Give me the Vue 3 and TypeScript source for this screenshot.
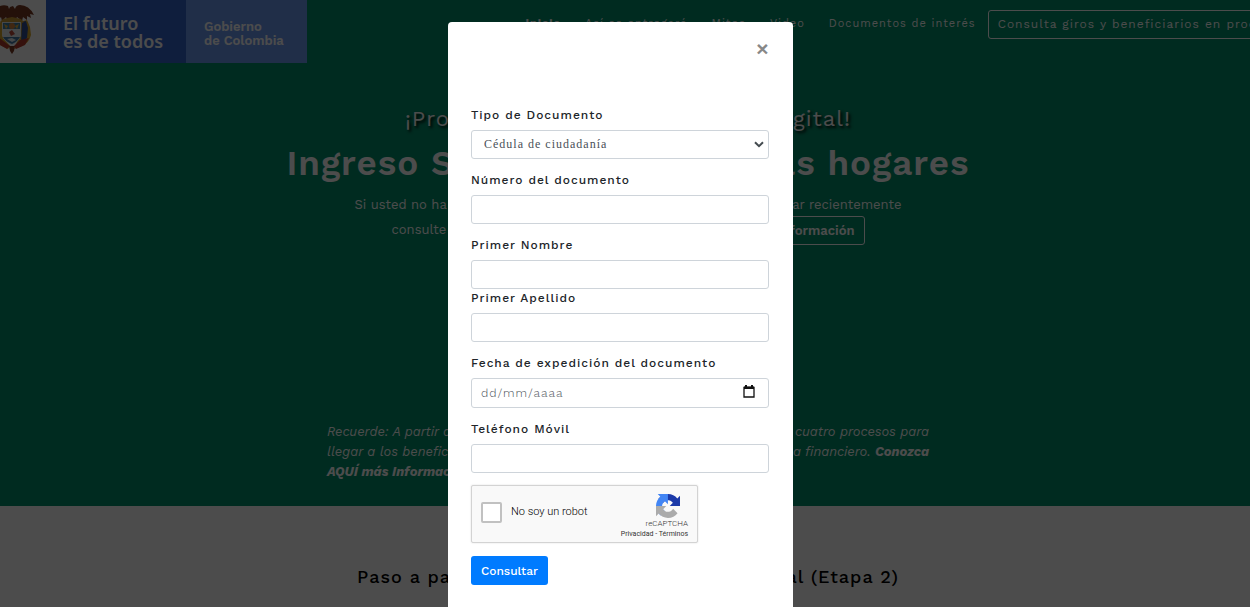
<script setup lang="ts">
import { ref } from 'vue'

const documentType = ref('cc')
const documentNumber = ref('')
const firstName = ref('')
const lastName = ref('')
const issueDate = ref('')
const phone = ref('')
const human = ref(false)
</script>

<template>
  <div class="page">
    <section class="hero">
      <header class="topbar">
        <div class="brand">
          <div class="arms">
            <svg width="46" height="63" viewBox="0 0 46 63" aria-hidden="true">
              <path d="M20 22 L27 20 L30 27 L31 35 Q29 43 22 46 L14 49 L17 42 L21 35Z" fill="#d8a92c" />
              <path d="M22 22 L26 21 L28 28 L27 38 L21 43Z" fill="#2f4f94" />
              <path d="M20 40 L29 38 L25 45 L16 49 L14 46Z" fill="#b23a2c" />
              <path d="M-2 23 L2 22 L3 38 L10 46 L8 49 L-2 44Z" fill="#d8a92c" />
              <path d="M-2 37 L2 40 L10 46 L7 49 L-2 44Z" fill="#b23a2c" />
              <path d="M10 7 L13 6 L15 9 Q16 5 20 5 Q29 5 34 15 L30 14 L31 18 L27 16 L27 20 L23 17 L22 21 L17 17 L15 21 H8 L6 17 L2 21 L1 17 L-2 20 V7 Q3 4 8 6 L9 9Z" fill="#7b3923" />
              <path d="M3 19 L12 17 L21 19 L24 22 L20 24 H3 L0 22Z" fill="#c99a35" />
              <path d="M2 22 H21 V36 Q18 42 12 45 Q5 42 2 36Z" fill="#e6edf0" />
              <path d="M3 23 H20 V29 H3Z" fill="#3f7fa8" />
              <path d="M4 24 L8 26 L6 29Z M19 24 L15 26 L17 29Z" fill="#e0b340" />
              <circle cx="12" cy="26" r="3" fill="#d3843c" />
              <path d="M9 32 L12 30 L15 34 L11 36Z" fill="#bd4c3b" />
              <path d="M3 37 H20 Q17 42 12 44 Q6 42 3 37Z" fill="#4479a3" />
              <path d="M7 39 L12 38 L16 40 L12 42Z" fill="#e6edf0" />
              <path d="M9 46 H15 L14 51 L12 54 L10 51Z" fill="#7b3923" />
            </svg>
          </div>
          <div class="motto">El futuro<br>es de todos</div>
          <div class="government">Gobierno<br>de Colombia</div>
        </div>
        <nav>
          <a class="active" href="#inicio">Inicio</a>
          <a href="#entrega">Así se entregará</a>
          <a href="#mitos">Mitos</a>
          <a href="#video">Video</a>
          <a href="#documentos">Documentos de interés</a>
          <a class="consult" href="#consulta">Consulta giros y beneficiarios en proceso</a>
        </nav>
      </header>
      <div class="intro">
        <h2><span>¡Programa</span><span>100% digital!</span></h2>
        <h1><span>Ingreso Solidario</span><span>más hogares</span></h1>
        <p><span>Si usted no ha recibido</span><span>en su celular recientemente</span></p>
        <div class="query"><span>consulte si es beneficiario</span><a href="#informacion">Más información</a></div>
      </div>
      <div class="reminder">
        <div><span>Recuerde: A partir de</span><span>cuatro procesos para</span></div>
        <div><span>llegar a los beneficiarios</span><span>del sistema financiero. <b>Conozca</b></span></div>
        <div><b>AQUÍ más Información</b></div>
      </div>
    </section>
    <section class="steps"><h2><span>Paso a paso</span><span>digital (Etapa 2)</span></h2></section>
    <div class="backdrop"></div>
    <div class="dialog" role="dialog" aria-modal="true" aria-label="Consulta de beneficiarios">
      <div class="dialog-head"><button class="close" type="button" aria-label="Cerrar">×</button></div>
      <form @submit.prevent>
        <div class="field">
          <label for="type">Tipo de Documento</label>
          <div class="control"><select id="type" v-model="documentType"><option value="cc">Cédula de ciudadanía</option></select>
            <svg class="chevron" width="10" height="7" viewBox="0 0 10 7" aria-hidden="true"><path d="M1 1.2 5 5.2 9 1.2" fill="none" stroke="#444b50" stroke-width="2" /></svg>
          </div>
        </div>
        <div class="field"><label for="number">Número del documento</label><input id="number" v-model="documentNumber" type="text"></div>
        <div class="field joined"><label for="first">Primer Nombre</label><input id="first" v-model="firstName" type="text"></div>
        <div class="field"><label for="last">Primer Apellido</label><input id="last" v-model="lastName" type="text"></div>
        <div class="field">
          <label for="date">Fecha de expedición del documento</label>
          <div class="control"><input id="date" v-model="issueDate" class="date" type="text" placeholder="dd/mm/aaaa">
            <svg class="calendar" width="12" height="13" viewBox="0 0 12 13" aria-hidden="true"><path d="M1 2.5H11V12H1Z" fill="none" stroke="#111" stroke-width="1.3" /><path d="M1 1.5H11V4H1ZM2 0H4V3H2ZM8 0H10V3H8Z" fill="#111" /></svg>
          </div>
        </div>
        <div class="field"><label for="phone">Teléfono Móvil</label><input id="phone" v-model="phone" type="tel"></div>
        <div class="captcha">
          <label><input v-model="human" type="checkbox"><span>No soy un robot</span></label>
          <div class="captcha-brand">
            <svg width="24" height="24" viewBox="0 0 64 64" aria-hidden="true">
              <path fill="#1c3aa9" d="M64 31.955l-.033-1.37V4.687l-7.16 7.16C50.948 4.674 42.033.093 32.05.093c-10.4 0-19.622 4.96-25.458 12.64l11.736 11.86a15.55 15.55 0 0 1 4.754-5.334c2.05-1.6 4.952-2.906 8.968-2.906.485 0 .86.057 1.135.163 4.976.393 9.288 3.14 11.828 7.124l-8.307 8.307L64 31.953" />
              <path fill="#4285f4" d="M31.862.094l-1.37.033H4.594l7.16 7.16C4.58 13.147 0 22.06 0 32.046c0 10.4 4.96 19.622 12.64 25.458L24.5 45.768a15.55 15.55 0 0 1-5.334-4.754c-1.6-2.05-2.906-4.952-2.906-8.968 0-.485.057-.86.163-1.135.393-4.976 3.14-9.288 7.124-11.828l8.307 8.307L31.86.095" />
              <path fill="#ababab" d="M.001 32.045l.033 1.37v25.898l7.16-7.16c5.86 7.173 14.774 11.754 24.76 11.754 10.4 0 19.622-4.96 25.458-12.64l-11.736-11.86a15.55 15.55 0 0 1-4.754 5.334c-2.05 1.6-4.952 2.906-8.968 2.906-.485 0-.86-.057-1.135-.163-4.976-.393-9.288-3.14-11.828-7.124l8.307-8.307-31.297.04" />
            </svg>
            <strong>reCAPTCHA</strong>
            <small><a href="#privacidad">Privacidad</a> - <a href="#terminos">Términos</a></small>
          </div>
        </div>
        <button class="submit" type="submit">Consultar</button>
      </form>
    </div>
  </div>
</template>

<style>
body { margin: 0; overflow: hidden; }
</style>

<style scoped>
* { box-sizing: border-box; }
.page { position: relative; min-height: 100vh; overflow: hidden; background: #fff; font-family: "Work Sans", Inter, "Noto Sans", sans-serif; letter-spacing: 1px; }
a { color: inherit; text-decoration: none; }
h1, h2, p { margin: 0; }
.hero { min-height: 506px; background: #008f6b; color: #fff; }
.topbar { display: flex; height: 63px; justify-content: space-between; }
.brand { display: flex; flex: none; letter-spacing: 0; }
.arms { width: 46px; background: #fff; }
.arms svg { display: block; }
.motto { width: 140px; padding: 14px 0 0 17px; background: #3366cc; font: 600 18px/18px "Noto Sans", sans-serif; }
.government { width: 121px; padding: 20px 0 0 18px; background: #6d9bf2; font-size: 13px; line-height: 14px; font-weight: 600; }
nav { display: flex; flex: none; align-items: flex-start; padding-top: 10px; margin-right: -40px; font-size: 11px; line-height: 27px; white-space: nowrap; }
nav a { margin-right: 24px; }
.active { font-weight: 700; }
nav .consult { margin: 0 0 0 -12px; padding: 0 9px; border: 1px solid; border-radius: 3px; font-size: 12px; }
.intro, .reminder, .steps { padding-left: 6px; }
.intro { padding-top: 38px; }
.intro > *, .steps h2 { display: flex; max-width: 100%; margin: 0 auto; justify-content: space-between; white-space: nowrap; }
.intro h2 { width: 446px; font-size: 22px; line-height: 36px; font-weight: 400; text-shadow: 2px 2px 3px #000; }
.intro h1 { width: 683px; font-size: 35px; line-height: 52px; font-weight: 600; }
.intro p { width: 547px; padding-top: 4px; font-size: 13px; line-height: 23px; letter-spacing: 0; }
.intro .query { width: 473px; font-size: 13px; line-height: 27px; letter-spacing: 0; }
.query a { padding: 0 9px; border: 1px solid; border-radius: 3px; font-weight: 600; }
.reminder { width: 608px; margin: 177px auto 0; font-size: 13px; line-height: 20px; font-style: italic; letter-spacing: 0; }
.reminder div { display: flex; justify-content: space-between; }
.steps { min-height: 101px; background: #fff; }
.steps h2 { width: 542px; padding-top: 56px; font-size: 18px; line-height: 30px; font-weight: 500; }
.backdrop { position: absolute; inset: 0; background: rgb(0 0 0 / 70%); }
.dialog { position: absolute; top: 22px; left: 50%; width: 345px; min-height: 620px; margin-left: -177px; padding: 15px 24px 23px 23px; background: #fff; border-radius: 4px; color: #212529; font-size: 12px; }
.dialog-head { display: flex; height: 69px; justify-content: flex-end; align-items: flex-start; }
.close { width: 13px; height: 24px; padding: 0; border: 0; background: none; color: #888; font: 700 21px/24px "Liberation Sans", sans-serif; }
form { display: flex; flex-direction: column; align-items: stretch; }
.field { margin-bottom: 12px; }
.field.joined { margin-bottom: 0; }
.field > label { display: block; height: 24px; line-height: 18px; font-weight: 500; }
.field input, select { display: block; width: 100%; height: 29px; padding: 4px 9px; border: 1px solid #ced4da; border-radius: 3px; background: #fff; color: #495057; font: inherit; letter-spacing: inherit; outline: 0; }
.control { position: relative; }
.control select { padding: 3px 12px 5px; appearance: none; font-family: "Liberation Serif", serif; }
.field .date { height: 30px; font-weight: 300; }
.date::placeholder { color: #495057; opacity: 1; }
.chevron, .calendar { position: absolute; top: 11px; right: 5px; pointer-events: none; }
.calendar { top: 7px; right: 14px; }
.captcha { display: flex; width: 227px; height: 58px; padding: 0 9px; justify-content: space-between; border: 1px solid #d3d3d3; border-radius: 2px; background: #f9f9f9; box-shadow: 0 0 2px #ddd; color: #000; font: 300 11px/14px Roboto, sans-serif; letter-spacing: 0; }
.captcha label { display: flex; align-items: center; gap: 9px; padding-bottom: 4px; }
.captcha input { appearance: none; width: 21px; height: 21px; margin: 0; border: 2px solid #c1c1c1; border-radius: 2px; background: #fff; }
.captcha-brand { display: flex; width: 70px; flex-direction: column; align-items: flex-end; padding-top: 8px; color: #333; }
.captcha-brand svg { margin-right: 8px; }
.captcha-brand strong { font-size: 8px; line-height: 12px; font-weight: 300; }
.captcha-brand small { font-size: 7px; line-height: 8px; font-weight: 400; white-space: nowrap; }
.submit { align-self: flex-start; width: 77px; height: 29px; margin-top: 13px; padding: 0; border: 0; border-radius: 3px; background: #007bff; color: #fff; font: inherit; font-weight: 500; letter-spacing: 0; }
</style>
